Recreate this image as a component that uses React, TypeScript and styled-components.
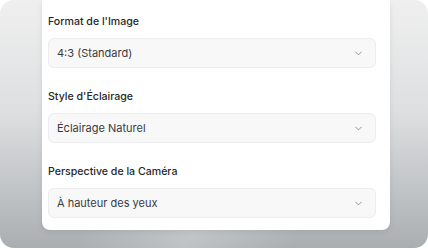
import { FC } from "react";
import styled, { createGlobalStyle } from "styled-components";

const GlobalStyle = createGlobalStyle`
  html, body {
    margin: 0;
    padding: 0;
    background: #ffffff;
    font-family: Inter, "Noto Sans", "Liberation Sans", sans-serif;
  }
  * { box-sizing: border-box; }
`;

type Field = { label: string; value: string };

const fields: Field[] = [
  { label: "Format de l'Image", value: "4:3 (Standard)" },
  { label: "Style d'Éclairage", value: "Éclairage Naturel" },
  { label: "Perspective de la Caméra", value: "À hauteur des yeux" },
];

const App: FC = () => {
  return (
    <>
      <GlobalStyle />
      <Frame>
        <Card>
          {fields.map((f, i) => (
            <Group key={f.label} $first={i === 0}>
              <Label>{f.label}</Label>
              <Select>
                <span>{f.value}</span>
                <Chevron />
              </Select>
            </Group>
          ))}
        </Card>
      </Frame>
    </>
  );
};

export default App;

const Chevron: FC = () => (
  <svg width="11" height="11" viewBox="0 0 24 24" fill="none" stroke="#8a8a8f" strokeWidth="2" strokeLinecap="round" strokeLinejoin="round">
    <path d="m6 9 6 6 6-6" />
  </svg>
);

const Frame = styled.div`
  width: 428px;
  height: 248px;
  border-radius: 14px;
  padding: 0 38px 18px 42px;
  display: flex;
  background:
    linear-gradient(115deg, rgba(255, 255, 255, 0) 35%, rgba(255, 255, 255, 0.25) 55%, rgba(255, 255, 255, 0) 75%),
    linear-gradient(180deg, #efefef 0%, #dddfe0 45%, #c2c5c7 75%, #aaaeb1 100%);
`;

const Card = styled.div`
  width: 348px;
  background: #ffffff;
  border-radius: 0 0 8px 8px;
  padding: 12px 14px 13px 6px;
  display: flex;
  flex-direction: column;
  box-shadow: 0 2px 6px rgba(0, 0, 0, 0.08);
`;

const Group = styled.div<{ $first: boolean }>`
  display: flex;
  flex-direction: column;
  gap: 6px;
  margin-top: ${({ $first }) => ($first ? "0" : "19px")};
`;

const Label = styled.div`
  font-size: 10.6px;
  line-height: 20px;
  font-weight: 500;
  color: #27272a;
`;

const Select = styled.div`
  height: 30px;
  border: 1px solid #ececee;
  border-radius: 6px;
  background: #f8f8f9;
  display: flex;
  align-items: center;
  justify-content: space-between;
  padding: 0 11px 0 8px;
  font-size: 11px;
  color: #3a3a3f;
`;
